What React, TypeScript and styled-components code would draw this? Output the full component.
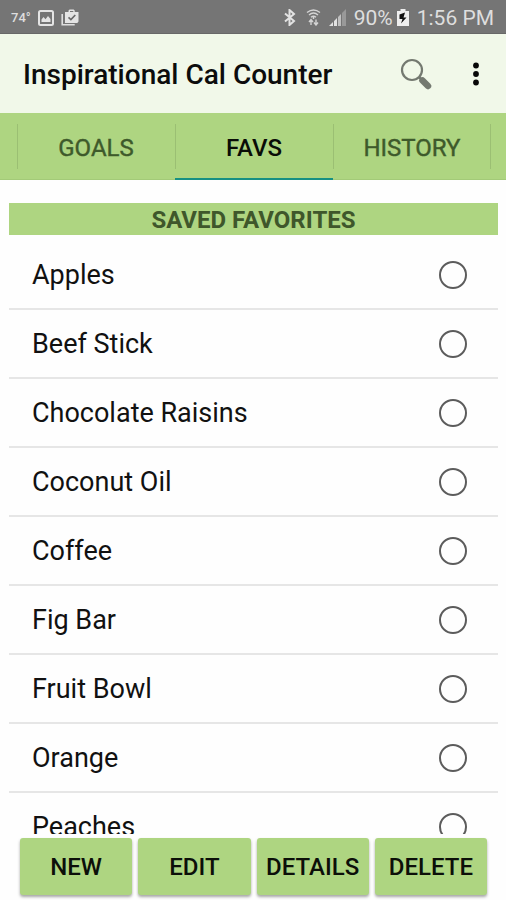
import React, { useState } from "react";
import styled, { createGlobalStyle } from "styled-components";

const green = "#aed581";

const GlobalStyle = createGlobalStyle`
  * { box-sizing: border-box; }
  body {
    margin: 0;
    background: #fefefe;
    font-family: Roboto, "Liberation Sans", sans-serif;
    color: #111;
  }
  button { font-family: inherit; border: 0; padding: 0; cursor: pointer; }
`;

const Screen = styled.div`
  display: flex;
  flex-direction: column;
  height: 100vh;
  overflow: hidden;
`;

const StatusBar = styled.div`
  flex: none;
  display: flex;
  align-items: center;
  justify-content: space-between;
  height: 34px;
  padding: 2px 12px 0 11px;
  background: #757575;
  border-bottom: 1px solid #686868;
  color: #dedede;
`;

const StatusGroup = styled.div<{ $gap: number }>`
  display: flex;
  align-items: center;
  gap: ${(p) => p.$gap}px;
  font-size: 21px;
  line-height: 24px;
  svg { display: block; }
`;

const Charge = styled.span`
  display: flex;
  align-items: center;
  gap: 4px;
`;

const Temperature = styled.span`
  font-size: 13px;
  font-weight: 500;
`;

const AppBar = styled.header`
  flex: none;
  display: flex;
  align-items: center;
  height: 79px;
  padding: 0 16px 0 23px;
  background: #f1f8e9;
`;

const Title = styled.h1`
  flex: 1;
  margin: 0;
  padding-top: 2px;
  font-size: 28px;
  line-height: 32px;
  font-weight: 500;
  white-space: nowrap;
  color: #0c0c0c;
`;

const AppBarIcons = styled.div`
  display: flex;
  align-items: center;
  gap: 30px;
`;

const IconButton = styled.button`
  display: flex;
  justify-content: center;
  min-width: 28px;
  background: none;
  svg { display: block; }
`;

const TabStrip = styled.nav`
  flex: none;
  display: flex;
  height: 67px;
  padding: 0 15px 0 17px;
  background: ${green};
  box-shadow: inset 0 -1px #a3ca78;
`;

const Tab = styled.button<{ $active: boolean }>`
  position: relative;
  flex: 1 1 0;
  padding-top: 4px;
  background: none;
  border-bottom: 2px solid ${(p) => (p.$active ? "#159083" : "transparent")};
  font-size: 24px;
  line-height: 28px;
  font-weight: ${(p) => (p.$active ? 500 : 400)};
  color: ${(p) => (p.$active ? "#0a0d07" : "#3e5a2b")};
  -webkit-text-stroke: ${(p) => (p.$active ? "0" : "0.4px")};

  &::before,
  &:last-child::after {
    content: "";
    position: absolute;
    top: 11px;
    bottom: 9px;
    left: 0;
    width: 1px;
    background: #9bbf73;
  }
  &:last-child::after {
    left: auto;
    right: 0;
  }
`;

const Content = styled.main`
  flex: 1;
  min-height: 0;
  display: flex;
  flex-direction: column;
  padding: 23px 8px 4px 9px;
`;

const Banner = styled.h2`
  flex: none;
  margin: 0;
  padding-top: 2px;
  background: ${green};
  color: #3f572b;
  font-size: 24px;
  line-height: 30px;
  font-weight: 700;
  text-align: center;
`;

const List = styled.ul`
  flex: 1;
  min-height: 0;
  margin: 6px 0 0;
  padding: 0;
  list-style: none;
  overflow-y: auto;
  scrollbar-width: none;
`;

const Row = styled.label`
  display: flex;
  align-items: center;
  justify-content: space-between;
  height: 69px;
  padding: 0 31px 0 23px;
  border-bottom: 2px solid #e6e6e6;
  font-size: 27px;
  line-height: 32px;
  cursor: pointer;
`;

const Radio = styled.input`
  appearance: none;
  width: 28px;
  height: 28px;
  margin: 0;
  border: 2px solid #5c5c5c;
  border-radius: 50%;
  &:checked { box-shadow: inset 0 0 0 5px #fefefe; background: #159083; }
`;

const Actions = styled.footer`
  flex: none;
  display: flex;
  gap: 6px;
  padding: 0 19px 5px 20px;
`;

const ActionButton = styled.button`
  flex: 1 1 0;
  height: 57px;
  border-radius: 3px;
  background: ${green};
  box-shadow: 0 2px 3px rgba(0, 0, 0, 0.35);
  font-size: 24px;
  line-height: 28px;
  font-weight: 500;
  color: #0c0f09;
`;

const PictureIcon = () => (
  <svg width="16" height="16" viewBox="0 0 16 16" fill="none">
    <rect x="1" y="1" width="14" height="14" rx="1.5" stroke="#e4e4e4" strokeWidth="2" />
    <path d="M3.500 12V9.500l2-2.500 2 2.300 2.500-3.300 2.500 3v3z" fill="#e4e4e4" />
  </svg>
);

const BagIcon = () => (
  <svg width="19" height="17" viewBox="0 0 19 17">
    <path d="M1.200 5v10.700h12.500" fill="none" stroke="#dedede" strokeWidth="1.600" />
    <path d="M4 3h3.500V1.600L8.600.5h4l1.100 1.100V3h3.800v9.500L16.300 14H4z" fill="#e4e4e4" />
    <path d="M9 2h3.300v1H9z" fill="#757575" />
    <path d="M7.500 8.300l2.400 2.300 4.400-4.600" fill="none" stroke="#686868" strokeWidth="1.600" />
  </svg>
);

const BluetoothIcon = () => (
  <svg width="13" height="17" viewBox="0 0 13 17" fill="none" stroke="#e2e2e2" strokeWidth="2">
    <path d="M2 4.500l9 7.500-4.500 4V1L11 5l-9 7.500" />
  </svg>
);

const WifiIcon = () => (
  <svg width="15" height="17" viewBox="0 0 15 17" fill="none" stroke="#d4d4d4" strokeWidth="1.400">
    <path d="M1 3.500q6.500-5 13 0M3 6q4.500-3.800 9 0M5 8.300q2.500-2 5 0" />
    <path d="M7.500 7v3M5 10.500V16M3 13l2-2.500L7 13M10 16v-5.500M8 13.500l2 2.500 2-2.500" />
  </svg>
);

const SignalIcon = () => (
  <svg width="17" height="17" viewBox="0 0 17 17">
    <path d="M0 17l4-4v4zM5 12l3-3v8H5z" fill="#e2e2e2" />
    <path d="M9 8l3-3v12H9z" fill="#c0c0c0" />
    <path d="M13 4l4-4v17h-4z" fill="#999" />
  </svg>
);

const BatteryIcon = () => (
  <svg width="12" height="17" viewBox="0 0 12 17">
    <path d="M3.500 0h5v2H12v15H0V2h3.500z" fill="#eee" />
    <path d="M8 3.500L2.500 5.500v4.500h3l-1.500 4.500L9.500 8.500h-3z" fill="#111" />
  </svg>
);

const SearchIcon = () => (
  <svg width="32" height="32" viewBox="0 0 32 32" fill="none" stroke="#747970">
    <circle cx="12" cy="12" r="10" strokeWidth="2.200" />
    <path d="M19 19l4 4" strokeWidth="2.500" />
    <path d="M22.500 22.500l5.500 5.500" strokeWidth="6.500" strokeLinecap="round" />
  </svg>
);

const MoreIcon = () => (
  <svg width="6" height="24" viewBox="0 0 6 24" fill="#080808">
    <circle cx="3" cy="3.500" r="2.900" />
    <circle cx="3" cy="12" r="2.900" />
    <circle cx="3" cy="20.500" r="2.900" />
  </svg>
);

const tabs = ["GOALS", "FAVS", "HISTORY"];
const foods = [
  "Apples",
  "Beef Stick",
  "Chocolate Raisins",
  "Coconut Oil",
  "Coffee",
  "Fig Bar",
  "Fruit Bowl",
  "Orange",
  "Peaches",
];
const actions = ["NEW", "EDIT", "DETAILS", "DELETE"];

export default function App() {
  const [tab, setTab] = useState("FAVS");
  return (
    <Screen>
      <GlobalStyle />
      <StatusBar>
        <StatusGroup $gap={7}>
          <Temperature>74°</Temperature>
          <PictureIcon />
          <BagIcon />
        </StatusGroup>
        <StatusGroup $gap={8}>
          <StatusGroup $gap={10}>
            <BluetoothIcon />
            <WifiIcon />
          </StatusGroup>
          <SignalIcon />
          <Charge>
            90%
            <BatteryIcon />
          </Charge>
          <span>1:56 PM</span>
        </StatusGroup>
      </StatusBar>
      <AppBar>
        <Title>Inspirational Cal Counter</Title>
        <AppBarIcons>
          <IconButton aria-label="Search">
            <SearchIcon />
          </IconButton>
          <IconButton aria-label="More options">
            <MoreIcon />
          </IconButton>
        </AppBarIcons>
      </AppBar>
      <TabStrip>
        {tabs.map((name) => (
          <Tab key={name} $active={name === tab} onClick={() => setTab(name)}>
            {name}
          </Tab>
        ))}
      </TabStrip>
      <Content>
        <Banner>SAVED FAVORITES</Banner>
        <List>
          {foods.map((food) => (
            <li key={food}>
              <Row>
                {food}
                <Radio type="radio" name="favorite" value={food} />
              </Row>
            </li>
          ))}
        </List>
      </Content>
      <Actions>
        {actions.map((label) => (
          <ActionButton key={label}>{label}</ActionButton>
        ))}
      </Actions>
    </Screen>
  );
}
